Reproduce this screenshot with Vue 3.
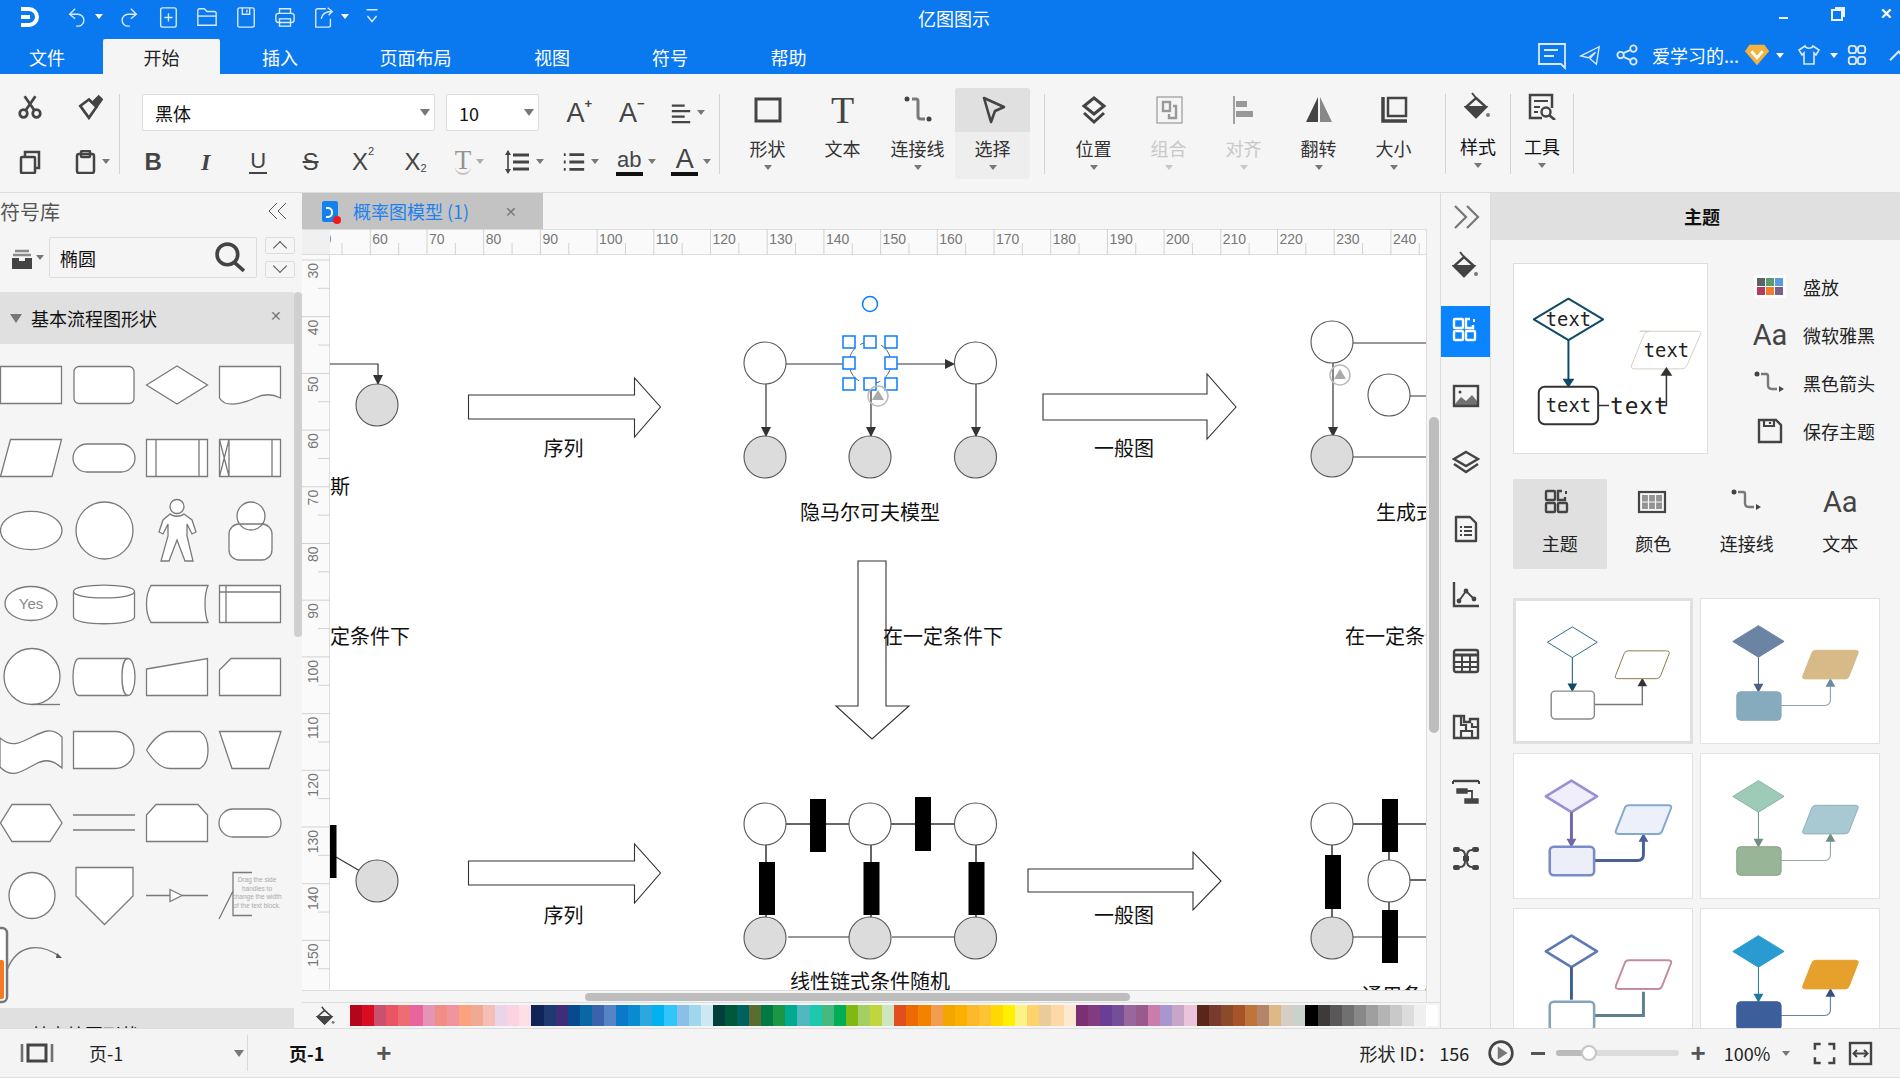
<script setup>
const icons = {
  logo: '<path d="M3 4H11a8 8 0 0 1 0 16H3" stroke-width="4"/><path d="M3 12H12" stroke-width="4"/>',
  undo: '<path d="M10 3L4 9L10 14"/><path d="M4 9H13a6.500 6.500 0 0 1 0 13H11"/>',
  redo: '<path d="M14 3L20 9L14 14"/><path d="M20 9H11a6.500 6.500 0 0 0 0 13H13"/>',
  add: '<rect x="4" y="2" width="17" height="21" rx="2"/><path d="M12.500 8V17M8 12.500H17"/>',
  open: '<path d="M2 21V5a2 2 0 0 1 2-2H9L12 6H20a2 2 0 0 1 2 2V21Z"/><path d="M2 11H22"/>',
  save: '<rect x="3" y="2" width="18" height="21" rx="2"/><path d="M8 2V9H16V2M13 4V7"/>',
  print: '<path d="M6 8V3H18V8"/><rect x="2" y="8" width="20" height="10" rx="3"/><rect x="6" y="14" width="12" height="8"/>',
  share: '<path d="M14 3H5a2 2 0 0 0-2 2V23H17a2 2 0 0 0 2-2V14"/><path d="M9 14C10 8 14 6 20 6M16 2L21 6L17 10"/>',
  custom: '<path d="M6 4H18M7 11L12 17L17 11" stroke-width="1.600"/>',
  comment: '<path d="M2 4H28V24V28L24 24H2Z" stroke-width="1.800"/><path d="M7 10H21M7 16H17" stroke-width="1.800"/>',
  send: '<path d="M22 3L2 13L10 15L18 9L12 16L19 22Z" stroke-width="1.500"/>',
  link: '<circle cx="5" cy="12" r="3.500"/><circle cx="19" cy="5" r="3.500"/><circle cx="19" cy="19" r="3.500"/><path d="M8 10L16 6.500M8 14L16 17.500"/>',
  shirt: '<path d="M8 3L2 7L5 12L7 10V21H17V10L19 12L22 7L16 3C15 6 9 6 8 3Z" stroke-width="1.600"/>',
  apps: '<rect x="3" y="2" width="8" height="8" rx="3"/><rect x="13" y="2" width="8" height="8" rx="3"/><rect x="3" y="14" width="8" height="8" rx="3"/><rect x="13" y="14" width="8" height="8" rx="3"/>',
  cut: '<circle cx="6" cy="18" r="3.500" stroke-width="2.500"/><circle cx="18" cy="18" r="3.500" stroke-width="2.500"/><path d="M8 15L17 2M16 15L7 2" stroke-width="2.500"/>',
  brush: '<path d="M3 11L11 22L18 12L11 5Z" stroke-width="2.500"/><path d="M11 5L14 8L20 2L23 5L18 12" fill="currentColor"/>',
  copy: '<rect x="3" y="7" width="14" height="16" rx="1" stroke-width="2.500"/><path d="M7 7V2H21V18H17" stroke-width="2.500"/>',
  paste: '<rect x="4" y="4" width="17" height="19" rx="2" stroke-width="2.500"/><rect x="8" y="1" width="9" height="6" rx="1" stroke-width="2.500"/>',
  align: '<path d="M2 4H16M2 10H22M2 16H16M2 22H22" stroke-width="2.400"/>',
  lineSpace: '<path d="M8 7H24M8 14H24M8 21H24" stroke-width="3"/><path d="M3 3V25" stroke-width="1.600"/><path d="M0 7L3 2L6 7ZM0 21L3 26L6 21Z" fill="currentColor" stroke="none"/>',
  list: '<path d="M7 5H23M7 13H23M7 21H23" stroke-width="3"/><path d="M1 5H3M1 13H3M1 21H3" stroke-width="3"/>',
  shape: '<rect x="3" y="4" width="24" height="22" stroke-width="3"/>',
  connect: '<circle cx="4" cy="4" r="2.500" fill="currentColor" stroke="none"/><path d="M9 4H13Q15 4 15 6V21Q15 24 18 24H22" stroke-width="3" opacity=".7"/><circle cx="26" cy="24" r="2.500" fill="currentColor" stroke="none"/>',
  cursor: '<path d="M6 3L26 12L17 16L13 27Z" stroke-width="2.600" stroke-linejoin="round"/>',
  layers: '<path d="M15 3L25 11L15 19L5 11Z" stroke-width="3"/><path d="M5 18L15 27L25 18" stroke-width="3"/>',
  group: '<rect x="3" y="2" width="25" height="26" stroke-width="1.200"/><rect x="9" y="7" width="7" height="9" stroke-width="2.400"/><path d="M19 11H22V23H15V19" stroke-width="2.400"/>',
  alignLeft: '<path d="M5 1V29" stroke-width="1.800"/><rect x="7" y="6" width="11" height="6" fill="currentColor" stroke="none"/><rect x="7" y="16" width="17" height="6" fill="currentColor" stroke="none"/>',
  flip: '<path d="M14 2V27H2Z" fill="#444" stroke="none"/><path d="M16 2V27H28Z" fill="#888" stroke="none"/>',
  size: '<rect x="9" y="3" width="18" height="18" stroke-width="2.500"/><path d="M4 2V26H28" stroke-width="3.500"/>',
  bucket: '<path d="M12 6L22 15L12 25L2 15Z" stroke-width="2.400"/><path d="M2 15H22L12 25Z" fill="currentColor"/><path d="M8 1L12 6" stroke-width="2"/><circle cx="24" cy="23" r="2" fill="currentColor" stroke="none" opacity=".7"/>',
  tool: '<path d="M24 16V3H2V26H14" stroke-width="2.500"/><path d="M6 9H20M6 15H12M6 20H10" stroke-width="2"/><circle cx="18" cy="20" r="4.500" stroke-width="2.400"/><path d="M21 23L27 28" stroke-width="2.600"/>',
  chevrons: '<path d="M3 3L14 14L3 25M15 3L26 14L15 25" stroke-width="2.200"/>',
  grid: '<rect x="2" y="2" width="9" height="9" rx="1" stroke-width="2.400"/><path d="M21 8V11H14V2H18" stroke-width="2.400"/><path d="M22 2V5" stroke-width="2"/><rect x="2" y="14" width="9" height="9" rx="1" stroke-width="2.400"/><rect x="14" y="14" width="9" height="9" rx="1" stroke-width="2.400"/>',
  image: '<rect x="2" y="3" width="24" height="20" stroke-width="2.400"/><path d="M3 21L9 14L14 18L20 12L25 18V22H3Z" fill="currentColor" stroke="none" opacity=".75"/><circle cx="8" cy="9" r="1.500" fill="currentColor" stroke="none"/>',
  stack: '<path d="M14 3L26 10L14 17L2 10Z" stroke-width="2.400"/><path d="M2 15L14 23L26 15" stroke-width="2.400"/>',
  doc: '<path d="M4 2H18L24 8V26H4Z" stroke-width="2.400" stroke-linejoin="round"/><path d="M8 12H10M12 12H20M8 16H10M12 16H20M8 20H10M12 20H20" stroke-width="2"/>',
  chart: '<path d="M2 1V25H27" stroke-width="2.400"/><path d="M7 20L14 10L22 18" stroke-width="1.800"/><circle cx="7" cy="20" r="2.400" fill="currentColor" stroke="none"/><circle cx="14" cy="10" r="2.400" fill="currentColor" stroke="none"/><circle cx="22" cy="18" r="2.400" fill="currentColor" stroke="none"/>',
  table: '<rect x="2" y="3" width="24" height="22" rx="2" stroke-width="2.400"/><path d="M2 8H26" stroke-width="3"/><path d="M2 15H26M2 20H26M10 8V25M18 8V25" stroke-width="2"/>',
  puzzle: '<path d="M2 25V3H12V9H18V6H26V25Z" stroke-width="2.400"/><path d="M9 3V12H14V18H9V25M14 18H20V25M20 10V14H26" stroke-width="2.200"/>',
  gantt: '<path d="M1 2H27" stroke-width="2.400"/><path d="M1 2V5M27 2V5" stroke-width="2"/><path d="M5 10H15V14H5ZM13 20H26V24H13Z" fill="currentColor" stroke-width="1.400"/><path d="M15 12H20V20" stroke-width="1.800"/>',
  mind: '<rect x="1" y="2" width="7" height="5" rx="2" fill="currentColor" stroke="none"/><rect x="20" y="2" width="7" height="5" rx="2" fill="currentColor" stroke="none"/><rect x="1" y="20" width="7" height="5" rx="2" fill="currentColor" stroke="none"/><rect x="20" y="20" width="7" height="5" rx="2" fill="currentColor" stroke="none"/><rect x="11" y="11" width="6" height="5" fill="currentColor" stroke="none"/><path d="M8 5Q13 5 13 11M20 5Q15 5 15 11M8 22Q13 22 13 16M20 22Q15 22 15 16"/>',
  drawer: '<path d="M4 5H18M2 9H20" stroke-width="2.500" opacity=".6"/><path d="M1 12H8V15H14V12H21V23H1Z" fill="currentColor" stroke="none"/>',
  search: '<circle cx="12" cy="12" r="10" stroke-width="3.500"/><path d="M19 20L28 28" stroke-width="3.500"/>',
  play: '<circle cx="12" cy="12" r="10.500" stroke-width="2.400"/><path d="M9 6L18 12L9 18Z" fill="#777" stroke="none"/>',
  pages: '<path d="M2 2V20M32 2V20" stroke-width="2.600" opacity=".75"/><rect x="8" y="3" width="18" height="16" stroke-width="3"/>',
  fit: '<path d="M2 8V2H8M16 2H22V8M22 16V22H16M8 22H2V16" stroke-width="2.600"/>',
  fitWidth: '<rect x="2" y="2" width="21" height="21" stroke-width="2.400"/><path d="M6 12.500H19" stroke-width="2"/><path d="M9 9L5.500 12.500L9 16M16 9L19.500 12.500L16 16" stroke-width="2"/>',
  palette: '<rect x="0" y="0" width="32" height="23" fill="#fff" stroke="none"/><rect x="3" y="3" width="8" height="8" fill="#5a6468" stroke="none"/><rect x="12" y="3" width="8" height="8" fill="#5b9a6b" stroke="none"/><rect x="21" y="3" width="8" height="8" fill="#5a9ae0" stroke="none"/><rect x="3" y="12" width="8" height="8" fill="#b63a5f" stroke="none"/><rect x="12" y="12" width="8" height="8" fill="#f07b2c" stroke="none"/><rect x="21" y="12" width="8" height="8" fill="#7a5e8c" stroke="none"/>',
  arrowLine: '<circle cx="3" cy="3" r="2.500" fill="currentColor" stroke="none"/><path d="M7 3H12Q14 3 14 5V14Q14 18 18 18H23" stroke-width="2.400" opacity=".7"/><path d="M26 18L31 21L26 24Z" transform="translate(-1 -3)" fill="currentColor" stroke="none"/>',
  saveTheme: '<path d="M2 2H19L24 7V24H2Z" stroke-width="2.400"/><path d="M7 2V8H17V2M13 4V6" stroke-width="2.200"/>',
  colorGrid: '<rect x="2" y="3" width="26" height="20" stroke-width="2.200"/><path d="M5 6H25V20H5Z" fill="currentColor" stroke="none" opacity=".55"/><path d="M5 13H25M11.500 6V20M18.500 6V20" stroke="#f5f5f5" stroke-width="1.200"/>',
  diamond: '<path d="M7 2H23L28 9L15 24L2 9Z" fill="#f2b23f" stroke="none"/><path d="M9 9L15 16L21 9" stroke="#fff" stroke-width="3"/>'
}

const menus = ['文件', '开始', '插入', '页面布局', '视图', '符号', '帮助']

const bigFirst = [
  { label: '形状', icon: 'shape', caret: true },
  { label: '文本', text: 'T' },
  { label: '连接线', icon: 'connect', caret: true },
  { label: '选择', icon: 'cursor', caret: true, active: true }
]
const bigSecond = [
  { label: '位置', icon: 'layers', caret: true },
  { label: '组合', icon: 'group', caret: true, off: true },
  { label: '对齐', icon: 'alignLeft', caret: true, off: true },
  { label: '翻转', icon: 'flip', caret: true },
  { label: '大小', icon: 'size', caret: true }
]

const sideIcons = [
  { name: 'chevrons', chev: true },
  { name: 'bucket' },
  { name: 'grid', active: true },
  { name: 'image' },
  { name: 'stack' },
  { name: 'doc' },
  { name: 'chart' },
  { name: 'table' },
  { name: 'puzzle' },
  { name: 'gantt' },
  { name: 'mind' }
]

// 符号库里的形状，每格 62x73
const shapes = [
  { d: 'M.5 18.500H61.500V55.500H.5Z' },
  { d: 'M6 18.500H56a5 5 0 0 1 5 5V50.500a5 5 0 0 1-5 5H6a5 5 0 0 1-5-5V23.500a5 5 0 0 1 5-5Z' },
  { d: 'M.5 37L31 18L61.500 37L31 56Z' },
  { d: 'M.5 18.500H61.500V50C52 45 44 46 36 50S14 58 6 55Q2 53 .5 50Z' },
  { d: 'M.5 55.500L10.500 18.500H61.500L52 55.500Z' },
  { d: 'M14 23H48a14 14 0 0 1 0 28H14a14 14 0 0 1 0-28Z' },
  { d: 'M.5 18.500H61.500V55.500H.5Z', line: 'M10 18.500V55.500M53 18.500V55.500' },
  { d: 'M.5 18.500H61.500V55.500H.5Z', line: 'M10 18.500V55.500M53 18.500V55.500M.5 18.500L10 55.500M10 18.500L.5 55.500' },
  { d: 'M.5 36.500A30.500 19 0 1 1 62 36.500A30.500 19 0 1 1 .5 36.500Z' },
  { d: 'M3 36.500A28.500 28.500 0 1 1 60 36.500A28.500 28.500 0 1 1 3 36.500Z' },
  { d: 'M24 20L17 26L13 38L17 40L22 30V42L15 67H23L31 46L39 67H47L41 42V30L46 40L50 38L46 26L38 20C35 23 27 23 24 20Z M24 12.500a7 7 0 1 1 14 0a7 7 0 1 1-14 0Z' },
  { d: 'M18 22a14 14 0 1 1 28 0a14 14 0 1 1-28 0Z M20 30H43a10 10 0 0 1 10 10V56a10 10 0 0 1-10 10H20a10 10 0 0 1-10-10V40a10 10 0 0 1 10-10Z' },
  { d: 'M5 36.500A26 17 0 1 1 57 36.500A26 17 0 1 1 5 36.500Z', text: 'Yes' },
  { d: 'M.5 24.500C.5 16 61.500 16 61.500 24.500V50C61.500 59 .5 59 .5 50Z', line: 'M.5 24.500C.5 33 61.500 33 61.500 24.500' },
  { d: 'M5 18.500H62C58 28 58 46 62 55.500H5C-1 46-1 28 5 18.500Z' },
  { d: 'M.5 18.500H61.500V55.500H.5Z', line: 'M7 18.500V55.500M.5 25H61.500' },
  { d: 'M4 36.500A28 28 0 1 1 60 36.500A28 28 0 1 1 4 36.500Z', line: 'M32 64.500H60' },
  { d: 'M6 18.500H55C59 18.500 62 27 62 37S59 55.500 55 55.500H6C2 55.500 0 46 0 37S2 18.500 6 18.500Z', line: 'M55 18.500C51 18.500 49 27 49 37S51 55.500 55 55.500' },
  { d: 'M.5 29L61.500 18.500V55.500H.5Z' },
  { d: 'M12 18.500H61.500V55.500H.5V30Z' },
  { d: 'M0 25C12 35 20 30 32 24S52 14 62 24V55C50 44 42 47 30 54S10 64 0 54Z' },
  { d: 'M.5 18.500H42a19 18.500 0 0 1 0 37H.5Z' },
  { d: 'M.5 37C8 25 16 18.500 24 18.500H54C60 22 62 30 62 37S60 52 54 55.500H24C16 55.500 8 49 .5 37Z' },
  { d: 'M.5 18.500H62L50 55.500H13Z' },
  { d: 'M.5 37L12 18.500H50L62 37L50 55.500H12Z' },
  { d: '', line: 'M0 29H62M0 44H62' },
  { d: 'M10 18.500H52L61.500 29V55.500H.5V29Z' },
  { d: 'M14 23H48a14 14 0 0 1 0 28H14a14 14 0 0 1 0-28Z' },
  { d: 'M9 36.500A23 23 0 1 1 55 36.500A23 23 0 1 1 9 36.500Z' },
  { d: 'M3 8.500H60V37L31.500 65.500L3 37Z' },
  { d: 'M24 30.500L36 36.500L24 42.500Z', line: 'M0 36.500H24M36 36.500H62' },
  { d: '', line: 'M33 13.500H14V56.500H33M0 60L14 32', note: true },
  { d: '', curve: true }
]

const swatches = [
  '#b5051a', '#d90d22', '#c9506e', '#eb5462', '#ee6d72', '#e9649d', '#e594b6', '#f08d84', '#f293a0', '#fca17d', '#efaa95', '#f6bdb9', '#ead5e8', '#fcd3e3', '#fde0e6',
  '#0f2557', '#1e3a70', '#402d78', '#074a8f', '#0a67a6', '#3b62ad', '#5585c5', '#0a7ac8', '#0a8bcf', '#2ea7e0', '#00b3ee', '#32c5fb', '#8bbfe8', '#9fd7ee', '#cbe8f3',
  '#003f3a', '#00583a', '#00625f', '#5a6c30', '#007945', '#1a9645', '#00a98f', '#4fb9bf', '#1ac9ae', '#46b97f', '#00ae55', '#7fb911', '#a6cf63', '#bfd73c', '#cde6c2',
  '#e34e1f', '#ec6a00', '#f38200', '#f29c4d', '#f4a600', '#fbb000', '#fdb92b', '#fcc432', '#ffd900', '#fff100', '#fdf286', '#ffd36c', '#eacb9a', '#fed9a5', '#fde8d0',
  '#7b2f74', '#823a80', '#6a3e96', '#744f98', '#97679e', '#9a5a8c', '#cc7bad', '#a995cf', '#c7a6c8', '#ebc3da',
  '#58261a', '#773a2c', '#8b4a29', '#a65427', '#bd753c', '#b4856a', '#dfb887', '#d6cdc5', '#c9d3ca',
  '#000000', '#3e3a39', '#595757', '#717071', '#888888', '#9f9f9f', '#b4b4b4', '#c9c9c9', '#dcdcdc', '#efefef', '#ffffff'
]

// 标尺，10 个单位 = 56.7px
const hTicks = []
for (let v = 50; v <= 245; v += 5) hTicks.push({ v, x: 370.3 + (v - 60) * 5.67 - 330, major: v % 10 === 0 })
const vTicks = []
for (let v = 30; v <= 155; v += 5) vTicks.push({ v, y: 260 + (v - 30) * 5.67 - 255, major: v % 10 === 0 })

const circles = [
  [377, 405, 1], [765, 363, 0], [975.500, 363, 0], [765, 457, 1], [870, 457, 1], [975.500, 457, 1],
  [1332, 342, 0], [1389, 395, 0], [1332, 456, 1],
  [377, 881, 1], [765, 824, 0], [870, 824, 0], [975.500, 824, 0], [765, 938, 1], [870, 938, 1], [975.500, 938, 1],
  [1332, 824, 0], [1389, 881, 0], [1332, 938, 1]
]
const bars = [
  [810, 799, 16, 53], [915, 797, 16, 54], [759, 862, 16, 53], [863.500, 862, 16, 53], [968.500, 862, 16, 53],
  [330, 825, 6.500, 53], [1325, 855, 16, 54], [1382, 799, 16, 53], [1382, 910, 16, 53]
]
const blockArrows = [
  'M468.500 395H634.500V378L660.500 407L634.500 437V419H468.500Z',
  'M1043 394H1207V374L1236 407L1207 439V420H1043Z',
  'M858 561H886V706H909L872 739L836 706H858Z',
  'M468.500 861H634.500V844L660.500 873L634.500 903V885H468.500Z',
  'M1028 869H1193V852L1221 881L1193 910V892H1028Z'
]
const labels = [
  ['序列', 563.500, 451, 'middle'], ['隐马尔可夫模型', 870, 515, 'middle'], ['一般图', 1124, 451, 'middle'],
  ['斯', 330, 489, 'start'], ['生成式模型', 1376, 515, 'start'],
  ['定条件下', 330, 639, 'start'], ['在一定条件下', 883, 639, 'start'], ['在一定条件下', 1345, 639, 'start'],
  ['序列', 563.500, 918, 'middle'], ['一般图', 1124, 918, 'middle'],
  ['线性链式条件随机', 870, 984, 'middle'], ['通用条件', 1362, 998, 'start']
]
const handles = []
for (const x of [849, 870, 891]) for (const y of [342, 363, 384]) if (!(x === 870 && y === 363)) handles.push([x, y])

const options = [
  { icon: 'palette', box: 'w32', label: '盛放' },
  { text: 'Aa', label: '微软雅黑' },
  { icon: 'arrowLine', box: 'w32', label: '黑色箭头' },
  { icon: 'saveTheme', label: '保存主题' }
]
const themeTabs = [
  { icon: 'grid', label: '主题', active: true },
  { icon: 'colorGrid', label: '颜色' },
  { icon: 'arrowLine', label: '连接线' },
  { text: 'Aa', label: '文本' }
]
const themes = [
  { df: '#fff', ds: '#2b6a82', dw: 1, rf: '#fff', rs: '#8a8a8a', rw: 1.500, pf: '#fff', ps: '#8a7640', pw: 1, c1: '#0e4a66', c1w: 1, c2: '#777', c2w: 1.500, a2: '#333' },
  { df: '#6b84a3', ds: '#6b84a3', dw: 1, rf: '#86abbc', rs: '#86abbc', rw: 1, pf: '#d8b988', ps: '#d8b988', pw: 1, c1: '#4d5f80', c1w: 1, c2: '#8aa7b5', c2w: 1.200, a2: '#6a8ca0', round: true },
  { df: '#f0eefa', ds: '#9a8fd4', dw: 2.600, rf: '#eceff8', rs: '#7a8cc8', rw: 2.600, pf: '#ecf1f9', ps: '#84a8cf', pw: 2, c1: '#7168a6', c1w: 3, c2: '#4d5f98', c2w: 3, a2: '#4d5f98', round: true },
  { df: '#9ecbb8', ds: '#8ab4a3', dw: 1, rf: '#99b598', rs: '#86a386', rw: 1, pf: '#a8c9d1', ps: '#8fb1bb', pw: 1, c1: '#6f8f85', c1w: 1, c2: '#97ab9f', c2w: 1.200, a2: '#6f8f85', round: true },
  { df: '#fff', ds: '#5b7ab5', dw: 2.600, rf: '#fff', rs: '#82a6b8', rw: 2.600, pf: '#fff', ps: '#c48c9c', pw: 2, c1: '#3f5f8c', c1w: 3, c2: '#5e7f8f', c2w: 3, noArrow: true },
  { df: '#2a9bd0', ds: '#2a9bd0', dw: 1, rf: '#3c5f9c', rs: '#3c5f9c', rw: 1, pf: '#e6a02c', ps: '#e6a02c', pw: 1, c1: '#1d7a9d', c1w: 1, c2: '#6b82a8', c2w: 1.200, a2: '#34507f', round: true }
]
</script>

<template>
  <div class="app">
    <header class="top">
      <div class="title-row">
        <div class="quick">
          <svg class="ic logo" viewBox="0 0 24 24" v-html="icons.logo"></svg>
          <span class="q undo"><svg class="ic q20" viewBox="0 0 24 24" v-html="icons.undo"></svg></span>
          <i class="caret white q-caret"></i>
          <span class="q redo"><svg class="ic q20" viewBox="0 0 24 24" v-html="icons.redo"></svg></span>
          <span class="q"><svg class="ic q20" viewBox="0 0 24 24" v-html="icons.add"></svg></span>
          <span class="q"><svg class="ic q20" viewBox="0 0 24 24" v-html="icons.open"></svg></span>
          <span class="q"><svg class="ic q20" viewBox="0 0 24 24" v-html="icons.save"></svg></span>
          <span class="q"><svg class="ic q20" viewBox="0 0 24 24" v-html="icons.print"></svg></span>
          <span class="q"><svg class="ic q20" viewBox="0 0 24 24" v-html="icons.share"></svg></span>
          <i class="caret white q-caret2"></i>
          <span class="q custom"><svg class="ic q20" viewBox="0 0 24 24" v-html="icons.custom"></svg></span>
        </div>
        <div class="app-title">亿图图示</div>
        <div class="win">
          <span class="win-min"></span>
          <span class="win-restore"></span>
          <span class="win-close">✕</span>
        </div>
      </div>
      <div class="menu-row">
        <nav class="menus">
          <span v-for="m in menus" :key="m" class="menu" :class="{ on: m === '开始' }">{{ m }}</span>
        </nav>
        <div class="account">
          <svg class="ic comment" viewBox="0 0 30 30" v-html="icons.comment"></svg>
          <svg class="ic send" viewBox="0 0 24 24" v-html="icons.send"></svg>
          <svg class="ic link" viewBox="0 0 24 24" v-html="icons.link"></svg>
          <span class="user">爱学习的...</span>
          <svg class="ic vip" viewBox="0 0 30 26" v-html="icons.diamond"></svg>
          <i class="caret white"></i>
          <svg class="ic shirt" viewBox="0 0 24 24" v-html="icons.shirt"></svg>
          <i class="caret white"></i>
          <svg class="ic apps" viewBox="0 0 24 24" v-html="icons.apps"></svg>
          <span class="collapse"></span>
        </div>
      </div>
    </header>

    <section class="ribbon">
      <div class="clip-group">
        <span class="tool upper"><svg class="ic r26" viewBox="0 0 24 24" v-html="icons.cut"></svg></span>
        <span class="tool upper"><svg class="ic r26" viewBox="0 0 24 24" v-html="icons.brush"></svg></span>
        <span class="tool"><svg class="ic r24" viewBox="0 0 24 24" v-html="icons.copy"></svg></span>
        <span class="tool paste"><svg class="ic r24" viewBox="0 0 24 24" v-html="icons.paste"></svg><i class="caret"></i></span>
      </div>
      <i class="sep"></i>
      <div class="font-group">
        <div class="font-row first">
          <div class="combo font">黑体<i class="caret lg"></i></div>
          <div class="combo num">10<i class="caret lg"></i></div>
          <span class="fbtn size-a">A<sup>+</sup></span>
          <span class="fbtn size-a">A<sup>−</sup></span>
          <span class="split"><svg class="ic r22" viewBox="0 0 24 24" v-html="icons.align"></svg><i class="caret"></i></span>
        </div>
        <div class="font-row second">
          <span class="fbtn bold">B</span>
          <span class="fbtn ital">I</span>
          <span class="fbtn"><span class="under">U</span></span>
          <span class="fbtn"><span class="strike">S</span></span>
          <span class="fbtn xs">X<sup>2</sup></span>
          <span class="fbtn xs">X<sub>2</sub></span>
          <span class="split off"><span class="tshadow">T</span><i class="caret"></i></span>
          <span class="split"><svg class="ic ls" viewBox="0 0 26 28" v-html="icons.lineSpace"></svg><i class="caret"></i></span>
          <span class="split"><svg class="ic r24" viewBox="0 0 24 26" v-html="icons.list"></svg><i class="caret"></i></span>
          <span class="split"><span class="ul-txt ab">ab</span><i class="caret"></i></span>
          <span class="split"><span class="ul-txt">A</span><i class="caret"></i></span>
        </div>
      </div>
      <i class="sep"></i>
      <div class="big-group">
        <div v-for="b in bigFirst" :key="b.label" class="big" :class="{ active: b.active }">
          <div class="big-icon">
            <span v-if="b.text" class="t-icon">{{ b.text }}</span>
            <svg v-else class="ic r30" viewBox="0 0 30 30" v-html="icons[b.icon]"></svg>
          </div>
          <div class="big-label">{{ b.label }}</div>
          <i v-if="b.caret" class="caret"></i>
        </div>
      </div>
      <i class="sep"></i>
      <div class="big-group wide">
        <div v-for="b in bigSecond" :key="b.label" class="big" :class="{ off: b.off }">
          <div class="big-icon">
            <svg class="ic r30" viewBox="0 0 30 30" v-html="icons[b.icon]"></svg>
          </div>
          <div class="big-label">{{ b.label }}</div>
          <i class="caret"></i>
        </div>
      </div>
      <i class="sep"></i>
      <div class="big narrow">
        <div class="big-icon"><svg class="ic r28" viewBox="0 0 28 28" v-html="icons.bucket"></svg></div>
        <div class="big-label">样式</div>
        <i class="caret"></i>
      </div>
      <i class="sep"></i>
      <div class="big narrow">
        <div class="big-icon"><svg class="ic r28" viewBox="0 0 28 28" v-html="icons.tool"></svg></div>
        <div class="big-label">工具</div>
        <i class="caret"></i>
      </div>
      <i class="sep"></i>
    </section>

    <main class="main">
      <aside class="lib">
        <div class="lib-head">
          <span>符号库</span>
          <span class="double-left"></span>
        </div>
        <div class="lib-search">
          <svg class="ic drawer" viewBox="0 0 22 24" v-html="icons.drawer"></svg>
          <i class="caret"></i>
          <div class="search-box">
            <span>椭圆</span>
            <svg class="ic search" viewBox="0 0 30 30" v-html="icons.search"></svg>
          </div>
          <div class="updown">
            <span class="ud up"></span>
            <span class="ud down"></span>
          </div>
        </div>
        <div class="lib-body">
          <div class="lib-list">
            <div class="lib-section">
              <i class="caret sec"></i>
              <span class="sec-name">基本流程图形状</span>
              <span class="sec-x">✕</span>
            </div>
            <div class="shape-grid">
              <svg v-for="(s, i) in shapes" :key="i" class="shape" viewBox="0 0 62 73">
                <path v-if="s.d" :d="s.d" fill="#fff" />
                <path v-if="s.line" :d="s.line" fill="none" />
                <text v-if="s.text" x="31" y="42" class="yes">{{ s.text }}</text>
                <g v-if="s.note" class="note">
                  <text x="38" y="23">Drag the side</text>
                  <text x="38" y="32">handles to</text>
                  <text x="38" y="40">change the width</text>
                  <text x="38" y="49">of the text block.</text>
                </g>
                <g v-if="s.curve">
                  <rect x="-14" y="-4" width="21" height="74" rx="5" fill="#fff" stroke="#777" stroke-width="2.500" />
                  <rect x="-12" y="28" width="16" height="39" rx="2" fill="#f57a20" stroke="none" />
                  <path d="M7 38C18 10 42 12 59 24" fill="none" />
                  <path d="M57 21L62 26L56 26Z" fill="#555" stroke="none" />
                </g>
              </svg>
            </div>
            <div class="lib-section next">
              <i class="caret sec"></i>
              <span class="sec-name">基本绘图形状</span>
            </div>
          </div>
          <div class="lib-scroll"><div class="lib-thumb"></div></div>
        </div>
      </aside>

      <section class="center">
        <div class="doc-tabs">
          <div class="doc-tab">
            <span class="doc-icon"><i></i></span>
            <span class="doc-name">概率图模型 (1)</span>
            <span class="doc-x">✕</span>
          </div>
        </div>
        <div class="work">
          <div class="work-main">
            <div class="h-ruler-row">
              <div class="corner"></div>
              <svg class="h-ruler" viewBox="0 0 1096 26">
                <g v-for="t in hTicks" :key="t.v">
                  <line :x1="t.x" :x2="t.x" :y1="t.major ? 0 : 14" y2="26" />
                  <text v-if="t.major" :x="t.x + 2" y="15">{{ t.v }}</text>
                </g>
              </svg>
            </div>
            <div class="canvas-row">
              <svg class="v-ruler" viewBox="0 0 28 735">
                <g v-for="t in vTicks" :key="t.v">
                  <line :x1="t.major ? 0 : 16" x2="28" :y1="t.y" :y2="t.y" />
                  <text v-if="t.major" x="16" :y="t.y + 3" :transform="`rotate(-90 16 ${t.y + 3})`">{{ t.v }}</text>
                </g>
              </svg>
              <svg class="canvas" viewBox="330 255 1096 735">
                <g class="thin">
                  <path d="M330 364H378V384" />
                  <path d="M786 364H849M891 364H945M766 384V436M871 384V436M976 384V436" />
                  <path d="M1353 343H1426M1410 396H1426M1353 457H1426M1333 363V436" />
                  <path d="M336 857L360 871" />
                  <path d="M788 937H849M892 937H955M1353 937H1426" />
                  <path class="grey-line" d="M786 824H849M891 824H955M766 845V862M871 845V862M976 845V862M766 915V917M871 915V917M976 915V917M1353 824H1426M1410 880H1426M1332 845V855M1332 909V917M1389 852V860M1389 902V910" />
                </g>
                <path class="head" d="M373 375H383L378 385Z M761 427H771L766 437Z M866 427H876L871 437Z M971 427H981L976 437Z M1328 427H1338L1333 437Z M945 359V369L955 364Z" />
                <path v-for="(d, i) in blockArrows" :key="i" class="block" :d="d" />
                <circle v-for="(c, i) in circles" :key="'c' + i" :cx="c[0]" :cy="c[1]" r="21" class="node" :fill="c[2] ? '#dcdcdc' : '#fff'" />
                <rect v-for="(b, i) in bars" :key="'b' + i" :x="b[0]" :y="b[1]" :width="b[2]" :height="b[3]" fill="#000" />
                <text v-for="(l, i) in labels" :key="'t' + i" :x="l[1]" :y="l[2]" :text-anchor="l[3]" class="cap">{{ l[0] }}</text>
                <circle cx="870" cy="363" r="21" fill="#fff" stroke="#666" stroke-dasharray="16 6" />
                <circle cx="870" cy="304" r="7.500" fill="#fff" class="sel" />
                <rect v-for="h in handles" :key="h.join()" :x="h[0] - 6" :y="h[1] - 6" width="12" height="12" fill="#fff" class="sel" />
                <g class="float-mark">
                  <circle cx="878" cy="396" r="10" />
                  <path d="M872 400L878 390L884 400Z" />
                </g>
                <g class="float-mark">
                  <circle cx="1340" cy="375" r="10" />
                  <path d="M1334 379L1340 369L1346 379Z" />
                </g>
              </svg>
            </div>
            <div class="h-scroll"><div class="h-thumb"></div></div>
          </div>
          <div class="v-scroll"><div class="v-thumb"></div></div>
        </div>
        <div class="colors">
          <span class="fill-btn"><svg class="ic r20" viewBox="0 0 28 28" v-html="icons.bucket"></svg></span>
          <div class="swatches">
            <i v-for="(c, i) in swatches" :key="i" class="swatch" :style="{ background: c }"></i>
          </div>
        </div>
      </section>

      <nav class="strip">
        <span v-for="s in sideIcons" :key="s.name" class="strip-btn" :class="{ active: s.active, chev: s.chev }">
          <svg class="ic r28" viewBox="0 0 28 28" v-html="icons[s.name]"></svg>
        </span>
      </nav>

      <aside class="theme">
        <div class="theme-head">主题</div>
        <div class="theme-top">
          <div class="preview">
            <svg viewBox="0 0 195 191">
              <path d="M55 35L90 56L55 77L20 56Z" fill="#fff" stroke="#0e4a66" stroke-width="2" stroke-linejoin="round" />
              <path d="M55 77V118" stroke="#0e4a66" stroke-width="2" />
              <path d="M49 116H61L55 125Z" fill="#0e4a66" />
              <rect x="25" y="124" width="60" height="38" rx="6" fill="#fff" stroke="#333" stroke-width="2" />
              <path d="M127 68H186Q190 68 188 72L175 102Q173 106 170 106H122Q117 106 119 102L131 72Q133 68 137 68Z" fill="#fff" stroke="#d5cfc2" />
              <path d="M85 143H96M147 143H154V112" fill="none" stroke="#333" stroke-width="1.500" />
              <path d="M148 113H160L154 104Z" fill="#333" />
              <text x="55" y="63" class="pv">text</text>
              <text x="154" y="94" class="pv">text</text>
              <text x="55" y="150" class="pv">text</text>
              <text x="97" y="152" class="pv xl">text</text>
            </svg>
          </div>
          <ul class="opts">
            <li v-for="o in options" :key="o.label">
              <span class="opt-icon">
                <span v-if="o.text" class="aa">{{ o.text }}</span>
                <svg v-else class="ic opt-svg" :viewBox="o.box ? '0 0 32 24' : '0 0 26 26'" :class="o.box" v-html="icons[o.icon]"></svg>
              </span>
              <span>{{ o.label }}</span>
            </li>
          </ul>
        </div>
        <div class="theme-tabs">
          <div v-for="t in themeTabs" :key="t.label" class="theme-tab" :class="{ active: t.active }">
            <div class="tab-icon">
              <span v-if="t.text" class="aa">{{ t.text }}</span>
              <svg v-else class="ic tab-svg" viewBox="0 0 32 26" v-html="icons[t.icon]"></svg>
            </div>
            <div>{{ t.label }}</div>
          </div>
        </div>
        <div class="cards">
          <div v-for="(t, i) in themes" :key="i" class="card" :class="{ picked: i === 0 }">
            <svg viewBox="0 0 180 146">
              <path d="M32 43L58 27L84 43L58 59Z" :fill="t.df" :stroke="t.ds" :stroke-width="t.dw" stroke-linejoin="round" />
              <path d="M58 59V92" fill="none" :stroke="t.c1" :stroke-width="t.c1w" />
              <path v-if="!t.noArrow" d="M53 86H63L58 95Z" :fill="t.c1" />
              <path :d="t.round ? 'M81 108H125Q131 108 131 102V84' : 'M81 108H131V84'" fill="none" :stroke="t.c2" :stroke-width="t.c2w" />
              <path v-if="!t.noArrow" d="M126 89H136L131 80Z" :fill="t.a2" />
              <rect x="36" y="94" width="45" height="29" rx="4" :fill="t.rf" :stroke="t.rs" :stroke-width="t.rw" />
              <path d="M116 52H156Q160 52 159 55L150 78Q149 81 146 81H106Q102 81 103 78L112 55Q113 52 116 52Z" :fill="t.pf" :stroke="t.ps" :stroke-width="t.pw" />
            </svg>
          </div>
        </div>
      </aside>
    </main>

    <footer class="status">
      <svg class="ic pages" viewBox="0 0 34 22" v-html="icons.pages"></svg>
      <div class="page-pick">页-1<i class="caret lg"></i></div>
      <i class="status-sep"></i>
      <b class="page-cur">页-1</b>
      <span class="plus page-plus">+</span>
      <span class="shape-id">形状 ID： 156</span>
      <svg class="ic play" viewBox="0 0 24 24" v-html="icons.play"></svg>
      <span class="minus"></span>
      <div class="slider"><i class="slider-fill"></i><i class="slider-knob"></i></div>
      <span class="plus zoom-plus">+</span>
      <span class="pct">100%</span>
      <i class="caret"></i>
      <svg class="ic fit" viewBox="0 0 24 24" v-html="icons.fit"></svg>
      <svg class="ic fit wide" viewBox="0 0 25 25" v-html="icons.fitWidth"></svg>
    </footer>
  </div>
</template>

<style scoped>
.app {
  width: 1900px;
  height: 1078px;
  overflow: hidden;
  background: #f5f5f5;
  color: #222;
  font-size: 18px;
}
.ic {
  display: block;
  flex-shrink: 0;
  fill: none;
  stroke: currentColor;
  stroke-width: 2;
  width: 24px;
  height: 24px;
  color: #444;
}
.r20 { width: 20px; height: 20px; }
.r22 { width: 22px; height: 22px; }
.r24 { width: 24px; height: 24px; }
.r26 { width: 26px; height: 26px; }
.r28 { width: 28px; height: 28px; }
.r30 { width: 30px; height: 30px; }
.caret {
  display: inline-block;
  flex-shrink: 0;
  width: 0;
  height: 0;
  border-top: 5px solid #777;
  border-left: 4px solid transparent;
  border-right: 4px solid transparent;
}
.caret.lg {
  border-top-width: 7px;
  border-left-width: 5px;
  border-right-width: 5px;
}
.caret.white { border-top-color: #fff; }

.top { height: 74px; background: #0a78ee; color: #fff; position: relative; }
.title-row { height: 39px; display: flex; align-items: center; }
.quick { display: flex; align-items: center; padding-left: 18px; margin-top: -6px; }
.quick .ic { color: #dbe9fb; stroke-width: 1.500; }
.quick .logo { width: 24px; height: 24px; color: #fff; stroke-width: 4; }
.q { width: 39px; display: flex; justify-content: center; }
.q20 { width: 22px; height: 22px; }
.q.undo { margin-left: 16px; width: 38px; }
.q-caret { margin-left: -1px; }
.q.redo { margin-left: 6px; }
.q-caret2 { margin: 0 4px 0 -2px; }
.q.custom { width: 38px; margin-left: 0; }
.app-title {
  position: absolute;
  left: 918px;
  top: 7px;
  font-size: 18px;
  line-height: 22px;
}
.win-min { width: 9px; height: 2px; background: #eaf3fe; position: absolute; left: 1779px; top: 17px; }
.win-restore { position: absolute; left: 1831px; top: 9px; width: 8px; height: 8px; border: 2px solid #eaf3fe; box-shadow: 3px -3px 0 -1px #eaf3fe; }
.win-close { position: absolute; left: 1880px; top: 2px; font-size: 15px; line-height: 22px; font-weight: 700; }

.menu-row { height: 35px; display: flex; align-items: flex-end; }
.menus { display: flex; height: 35px; }
.menu {
  line-height: 36px;
  font-size: 18px;
  text-align: center;
  white-space: nowrap;
  flex-shrink: 0;
}
.menu:nth-child(1) { width: 94px; margin-right: 9px; }
.menu:nth-child(2) { width: 117px; }
.menu:nth-child(3) { width: 120px; }
.menu:nth-child(4) { width: 151px; }
.menu:nth-child(5) { width: 122px; }
.menu:nth-child(6) { width: 114px; }
.menu:nth-child(7) { width: 123px; }
.menu.on {
  background: #f5f5f5;
  color: #222;
  border-radius: 2px 2px 0 0;
}
.account {
  position: absolute;
  left: 1537px;
  top: 39px;
  height: 32px;
  display: flex;
  align-items: center;
}
.account .ic { color: #dbe9fb; }
.account .comment { width: 30px; height: 30px; }
.account .send { width: 22px; height: 22px; margin-left: 12px; }
.account .link { width: 22px; height: 22px; margin-left: 15px; }
.user { margin-left: 14px; width: 88px; font-size: 18px; white-space: nowrap; }
.account .vip { width: 28px; height: 26px; margin: 0 5px 0 3px; }
.account .shirt { margin-left: 13px; margin-right: 9px; }
.account .apps { margin-left: 8px; width: 22px; height: 22px; }
.collapse {
  width: 11px;
  height: 11px;
  margin-left: 24px;
  border-left: 2px solid #dbe9fb;
  border-top: 2px solid #dbe9fb;
  transform: rotate(45deg);
  margin-top: 8px;
}

.ribbon {
  height: 119px;
  display: flex;
  align-items: flex-start;
  border-bottom: 1px solid #ddd;
  box-sizing: border-box;
  background: #f5f5f5;
}
.sep {
  width: 1px;
  height: 80px;
  margin-top: 20px;
  background: #d3d3d3;
  flex-shrink: 0;
}
.clip-group {
  width: 119px;
  padding-top: 20px;
  display: grid;
  grid-template-columns: 60px 59px;
  grid-auto-rows: 37px;
  row-gap: 12px;
  box-sizing: border-box;
}
.tool { display: flex; align-items: center; justify-content: center; }
.tool.upper { align-items: flex-start; }
.tool.paste { gap: 5px; padding-left: 4px; }
.font-group { width: 599px; padding-top: 20px; box-sizing: border-box; }
.font-row { display: flex; align-items: center; height: 37px; }
.font-row.first { padding-left: 22px; }
.font-row.second { margin-top: 12px; padding-left: 7px; }
.combo {
  height: 37px;
  background: #fff;
  border: 1px solid #ddd;
  border-radius: 2px;
  box-sizing: border-box;
  display: flex;
  align-items: center;
  justify-content: space-between;
  padding: 0 4px 0 12px;
  font-size: 18px;
  color: #111;
}
.combo.font { width: 293px; }
.combo.num { width: 93px; margin-left: 11px; margin-right: 14px; }
.fbtn {
  width: 52.500px;
  display: flex;
  justify-content: center;
  align-items: center;
  color: #444;
  font-family: "Liberation Sans", sans-serif;
  font-size: 24px;
  line-height: 30px;
}
.fbtn sup { font-size: 13px; font-weight: 700; line-height: 0; align-self: flex-start; margin-top: 6px; }
.fbtn sub { font-size: 11px; line-height: 0; align-self: flex-end; margin-bottom: 9px; }
.size-a { font-size: 27px; }
.bold { font-weight: 700; }
.ital { font-style: italic; font-weight: 700; font-family: "Liberation Serif", serif; }
.under { border-bottom: 2px solid #444; line-height: 22px; font-size: 22px; padding: 0 1px; }
.strike { text-decoration: line-through; font-size: 24px; }
.xs sup { font-size: 11px; font-weight: 400; margin-top: 4px; }
.split {
  width: 55.500px;
  display: flex;
  align-items: center;
  justify-content: center;
  gap: 5px;
  color: #444;
}
.font-row.first .split { margin-left: 2px; }
.split.off { opacity: .55; }
.tshadow {
  font-family: "Liberation Serif", serif;
  font-size: 27px;
  line-height: 25px;
  border-bottom: 2px solid #999;
  border-radius: 0 0 8px 8px;
}
.ls { width: 26px; height: 28px; }
.ul-txt {
  font-family: "Liberation Sans", sans-serif;
  font-size: 27px;
  line-height: 25px;
  border-bottom: 4px solid #111;
  width: 27px;
  text-align: center;
  color: #444;
}
.ul-txt.ab { font-size: 22px; }

.big-group { display: flex; padding-left: 10px; padding-right: 14px; padding-top: 14px; }
.big-group.wide { padding-left: 11px; }
.big {
  width: 75px;
  height: 91px;
  display: flex;
  flex-direction: column;
  align-items: center;
  border-radius: 3px;
  color: #333;
}
.big.active { background: #eee; }
.big.active .big-icon { background: #e0e0e0; border-radius: 3px 3px 0 0; }
.big-icon {
  width: 100%;
  height: 44px;
  display: flex;
  align-items: center;
  justify-content: center;
}
.big-label { font-size: 18px; line-height: 26px; margin-top: 3px; white-space: nowrap; color: #333; }
.big .caret { margin-top: 4px; }
.big.off .big-label { color: #c8c8c8; }
.big.off .ic { color: #999; }
.big.off .caret { border-top-color: #c8c8c8; }
.big.narrow { width: 64px; margin-top: 14px; }
.big.narrow:nth-last-child(2) { width: 62px; }
.big.narrow .big-icon { height: 36px; }
.big.narrow .big-label { margin-top: 9px; color: #111; }
.big.narrow .caret { margin-top: 4px; }
.t-icon {
  font-family: "Liberation Serif", serif;
  font-size: 38px;
  line-height: 38px;
  color: #444;
}

.main { height: 835px; display: flex; overflow: hidden; }

.lib {
  width: 302px;
  flex-shrink: 0;
  box-sizing: border-box;
  overflow: hidden;
}
.lib-head {
  height: 44px;
  display: flex;
  align-items: center;
  justify-content: space-between;
  font-size: 20px;
  color: #555;
  padding-right: 15px;
  padding-bottom: 8px;
  box-sizing: border-box;
}
.double-left {
  width: 18px;
  height: 16px;
  position: relative;
  background:
    linear-gradient(45deg, transparent 44%, #555 44%, #555 56%, transparent 56%) 0 8px / 8px 8px no-repeat,
    linear-gradient(-45deg, transparent 44%, #555 44%, #555 56%, transparent 56%) 0 0 / 8px 8px no-repeat,
    linear-gradient(45deg, transparent 44%, #555 44%, #555 56%, transparent 56%) 9px 8px / 8px 8px no-repeat,
    linear-gradient(-45deg, transparent 44%, #555 44%, #555 56%, transparent 56%) 9px 0 / 8px 8px no-repeat;
}
.lib-search { height: 41px; display: flex; align-items: center; margin-bottom: 14px; padding-left: 11px; }
.drawer { width: 22px; height: 24px; }
.lib-search .caret { margin-left: 3px; margin-right: 5px; }
.search-box {
  width: 208px;
  height: 41px;
  box-sizing: border-box;
  border: 1px solid #ddd;
  border-radius: 2px;
  display: flex;
  align-items: center;
  justify-content: space-between;
  padding: 0 10px;
  color: #111;
}
.search { width: 31px; height: 31px; }
.updown {
  margin-left: 8px;
  width: 30px;
  height: 41px;
  display: flex;
  flex-direction: column;
  justify-content: space-between;
}
.ud {
  height: 17px;
  border: 1px solid #ddd;
  border-radius: 2px;
  box-sizing: border-box;
  display: flex;
  justify-content: center;
  position: relative;
}
.ud::after {
  content: "";
  width: 9px;
  height: 9px;
  border: solid #555;
  border-width: 1.500px 0 0 1.500px;
  transform: rotate(45deg);
  margin-top: 5px;
}
.ud.down::after { transform: rotate(225deg); margin-top: -1px; }

.lib-body { display: flex; }
.lib-list { width: 294px; flex-shrink: 0; }
.lib-section {
  height: 52px;
  background: #e0e0e0;
  display: flex;
  align-items: center;
  padding-left: 10px;
  position: relative;
}
.caret.sec { border-top-width: 9px; border-left-width: 6.500px; border-right-width: 6.500px; }
.sec-name { margin-left: 9px; color: #111; white-space: nowrap; }
.sec-x { position: absolute; left: 270px; top: 13px; color: #777; font-size: 14px; }
.shape-grid {
  padding-top: 4px;
  display: grid;
  grid-template-columns: repeat(4, 62px);
  grid-auto-rows: 73px;
  column-gap: 11px;
}
.shape {
  width: 62px;
  height: 73px;
  overflow: visible;
  stroke: #7a7a7a;
  stroke-width: 1.300;
}
.yes {
  font-family: "Liberation Sans", sans-serif;
  font-size: 15px;
  fill: #888;
  stroke: none;
  text-anchor: middle;
}
.note text {
  font-family: "Liberation Sans", sans-serif;
  font-size: 6.500px;
  fill: #aaa;
  stroke: none;
  text-anchor: middle;
}
.lib-section.next { margin-top: 3px; }
.lib-scroll { width: 8px; }
.lib-thumb { width: 8px; height: 345px; background: #d0d0d0; border-radius: 4px; }

.center { width: 1138px; flex-shrink: 0; display: flex; flex-direction: column; }
.doc-tabs { height: 36px; }
.doc-tab {
  width: 241px;
  height: 36px;
  background: #c3c3c3;
  display: flex;
  align-items: center;
  box-sizing: border-box;
  padding-left: 20px;
}
.doc-icon {
  width: 16px;
  height: 21px;
  background: #1283ee;
  border-radius: 2px;
  position: relative;
}
.doc-icon::before {
  content: "";
  position: absolute;
  left: 4px;
  top: 6px;
  width: 5px;
  height: 7px;
  border: 2px solid #fff;
  border-left: 0;
  border-radius: 0 5px 5px 0;
}
.doc-icon i {
  position: absolute;
  right: -3px;
  bottom: -2px;
  width: 8px;
  height: 8px;
  background: #f01818;
  border-radius: 50%;
}
.doc-name {
  margin-left: 15px;
  width: 134px;
  color: #1d82ee;
  font-size: 18px;
  white-space: nowrap;
}
.doc-x { color: #777; font-size: 14px; margin-left: 18px; }

.work { height: 773px; display: flex; }
.work-main { width: 1124px; display: flex; flex-direction: column; }
.h-ruler-row { height: 26px; display: flex; }
.corner { width: 28px; background: #f0f0f0; border-top: 1px solid #ddd; border-bottom: 1px solid #ddd; box-sizing: border-box; }
.h-ruler, .v-ruler { display: block; background: #fafafa; }
.h-ruler { width: 1096px; height: 26px; box-shadow: inset 0 1px 0 #ddd, inset 0 -1px 0 #ddd; }
.h-ruler line, .v-ruler line { stroke: #d2d2d2; stroke-width: 1; }
.h-ruler text, .v-ruler text {
  font-family: "Liberation Sans", sans-serif;
  font-size: 14px;
  fill: #777;
}
.v-ruler text { text-anchor: end; }
.canvas-row { height: 735px; display: flex; }
.v-ruler { width: 28px; height: 735px; box-shadow: inset -1px 0 0 #ddd; }
.canvas { width: 1096px; height: 735px; display: block; background: #fff; }
.thin path { fill: none; stroke: #333; stroke-width: 1.200; }
.thin .grey-line { stroke: #666; stroke-width: 2; }
.head { fill: #333; }
.block { fill: #fff; stroke: #333; stroke-width: 1.100; stroke-linejoin: miter; }
.node { stroke: #555; stroke-width: 1.100; }
.cap { font-size: 20px; fill: #111; dominant-baseline: middle; }
.sel { stroke: #0a7cff; stroke-width: 1.500; }
.float-mark circle { fill: none; stroke: #bbb; stroke-width: 1.500; }
.float-mark path { fill: #aaa; }
.h-scroll { height: 12px; border-top: 1px solid #ddd; box-sizing: border-box; background: #f5f5f5; padding: 2px 0 0 283px; }
.h-thumb { width: 545px; height: 8px; background: #bdbdbd; border-radius: 4px; }
.v-scroll {
  width: 14px;
  border-left: 1px solid #ddd;
  box-sizing: border-box;
  padding: 188px 0 0 2px;
  background: #f5f5f5;
}
.v-thumb { width: 10px; height: 316px; background: #bdbdbd; border-radius: 5px; }
.colors {
  height: 26px;
  display: flex;
  align-items: center;
  border-top: 1px solid #ddd;
  box-sizing: border-box;
}
.fill-btn { width: 48px; display: flex; justify-content: center; }
.swatches { width: 1088px; height: 21px; display: flex; }
.swatch { flex: 1; }

.strip {
  width: 51px;
  flex-shrink: 0;
  border-left: 1px solid #ddd;
  border-right: 1px solid #ddd;
  box-sizing: border-box;
  display: flex;
  flex-direction: column;
}
.strip-btn {
  height: 66px;
  flex-shrink: 0;
  display: flex;
  align-items: center;
  justify-content: center;
  width: 49px;
}
.strip-btn.chev { height: 39px; padding-top: 10px; box-sizing: border-box; align-items: flex-start; }
.strip-btn.chev .ic { color: #777; }
.strip-btn.active { background: linear-gradient(#0a84ff, #0a84ff) center / 100% 51px no-repeat; }
.strip-btn.active .ic { color: #fff; }

.theme { width: 409px; flex-shrink: 0; overflow: hidden; }
.theme-head {
  height: 47px;
  background: #e0e0e0;
  text-align: center;
  line-height: 47px;
  font-weight: 700;
  font-size: 18px;
  color: #111;
  padding-left: 13px;
}
.theme-top { display: flex; margin: 23px 0 0 22px; }
.preview {
  width: 195px;
  height: 191px;
  background: #fff;
  border: 1px solid #ddd;
  box-sizing: border-box;
}
.preview svg { display: block; width: 193px; height: 189px; }
.pv {
  font-family: "DejaVu Sans Mono", monospace;
  font-size: 19px;
  fill: #222;
  text-anchor: middle;
}
.pv.xl { font-size: 23px; text-anchor: start; letter-spacing: 1px; }
.opts { list-style: none; margin: 0 0 0 39px; padding: 0; }
.opts li { height: 48px; display: flex; align-items: center; gap: 10px; white-space: nowrap; color: #222; }
.opt-icon { width: 46px; display: flex; justify-content: center; }
.opt-svg { width: 26px; height: 26px; }
.opt-svg.w32 { width: 32px; height: 24px; }
.aa { font-family: "Roboto", "Liberation Sans", sans-serif; font-size: 29px; line-height: 30px; color: #444; }
.theme-tabs {
  margin: 24px 0 0 22px;
  display: grid;
  grid-template-columns: repeat(4, 93.500px);
}
.theme-tab {
  height: 90px;
  display: flex;
  flex-direction: column;
  align-items: center;
  color: #222;
}
.theme-tab.active { background: #e0e0e0; }
.tab-icon { height: 46px; display: flex; align-items: center; justify-content: center; }
.tab-svg { width: 32px; height: 26px; }
.theme-tab > div:last-child { margin-top: 5px; }
.cards {
  margin: 29px 0 0 22px;
  display: grid;
  grid-template-columns: repeat(2, 180px);
  column-gap: 7px;
  row-gap: 9px;
}
.card {
  height: 146px;
  background: #fff;
  border: 1px solid #e2e2e2;
  box-sizing: border-box;
}
.card.picked { border: 3px solid #e0e0e0; }
.card svg { display: block; width: 100%; height: 100%; }
.card.picked svg { width: 174px; height: 140px; }

.status {
  height: 50px;
  display: flex;
  align-items: center;
  background: #f4f4f4;
  border-top: 1px solid #ddd;
  border-bottom: 1px solid #ddd;
  box-sizing: border-box;
}
.status .pages { width: 34px; height: 22px; margin-left: 20px; }
.page-pick {
  width: 158px;
  margin-left: 35px;
  display: flex;
  align-items: center;
  justify-content: space-between;
  color: #222;
  padding-right: 3px;
  box-sizing: border-box;
}
.status-sep { width: 1px; height: 36px; background: #d9d9d9; }
.page-cur { margin-left: 41px; color: #111; }
.plus { font-family: "Liberation Sans", sans-serif; font-size: 26px; font-weight: 700; color: #555; line-height: 28px; }
.page-plus { margin-left: 52px; }
.shape-id { margin-left: 968px; white-space: nowrap; color: #222; width: 125px; }
.status .play { margin-left: 4px; width: 26px; height: 26px; }
.minus { width: 14px; height: 3px; background: #555; margin-left: 17px; }
.slider {
  width: 123px;
  height: 6px;
  border-radius: 3px;
  background: #dcdcdc;
  margin-left: 11px;
  position: relative;
}
.slider-fill { position: absolute; left: 0; top: 0; width: 33px; height: 6px; border-radius: 3px; background: #bbb; }
.slider-knob {
  position: absolute;
  left: 25px;
  top: -5px;
  width: 16px;
  height: 16px;
  border-radius: 50%;
  background: #fff;
  border: 2px solid #c6c6c6;
  box-sizing: border-box;
}
.zoom-plus { margin-left: 11px; }
.pct { margin-left: 18px; width: 54px; font-size: 18px; color: #222; }
.status .caret { margin-left: 4px; }
.status .fit { margin-left: 23px; width: 23px; height: 23px; }
.status .fit.wide { margin-left: 12px; width: 25px; height: 25px; }
</style>

<style>
html, body { margin: 0; padding: 0; }
body {
  font-family: "Noto Sans CJK SC", "Noto Sans", sans-serif;
}
</style>
